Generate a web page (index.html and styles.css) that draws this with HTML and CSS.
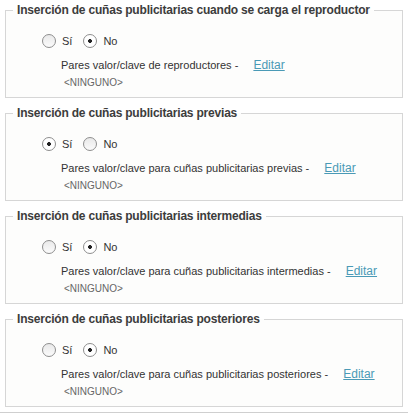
FILE: index.html
```html
<!DOCTYPE html>
<html lang="es">
<head>
    <meta charset="utf-8">
    <link rel="stylesheet" href="styles.css">
</head>
<body>
    <div class="panel">
        <fieldset class="grupo">
            <legend>Inserción de cuñas publicitarias cuando se carga el reproductor</legend>
            <div class="opciones">
                <label><input type="radio" name="carga"> Sí</label>
                <label><input type="radio" name="carga" checked> No</label>
            </div>
            <p class="pares">Pares valor/clave de reproductores - <a href="#">Editar</a></p>
            <p class="ninguno">&lt;NINGUNO&gt;</p>
        </fieldset>
        <fieldset class="grupo">
            <legend>Inserción de cuñas publicitarias previas</legend>
            <div class="opciones">
                <label><input type="radio" name="previas" checked> Sí</label>
                <label><input type="radio" name="previas"> No</label>
            </div>
            <p class="pares">Pares valor/clave para cuñas publicitarias previas - <a href="#">Editar</a></p>
            <p class="ninguno">&lt;NINGUNO&gt;</p>
        </fieldset>
        <fieldset class="grupo">
            <legend>Inserción de cuñas publicitarias intermedias</legend>
            <div class="opciones">
                <label><input type="radio" name="intermedias"> Sí</label>
                <label><input type="radio" name="intermedias" checked> No</label>
            </div>
            <p class="pares">Pares valor/clave para cuñas publicitarias intermedias - <a href="#">Editar</a></p>
            <p class="ninguno">&lt;NINGUNO&gt;</p>
        </fieldset>
        <fieldset class="grupo">
            <legend>Inserción de cuñas publicitarias posteriores</legend>
            <div class="opciones">
                <label><input type="radio" name="posteriores"> Sí</label>
                <label><input type="radio" name="posteriores" checked> No</label>
            </div>
            <p class="pares">Pares valor/clave para cuñas publicitarias posteriores - <a href="#">Editar</a></p>
            <p class="ninguno">&lt;NINGUNO&gt;</p>
        </fieldset>
    </div>
    <div class="pie"></div>
</body>
</html>
```

FILE: styles.css
```css
body {
    margin: 0;
    background-color: #fff;
    font-family: "Liberation Sans", Arial, sans-serif;
    color: #333;
}
.panel {
    padding: 3px 5px 0 5px;
}
.grupo {
    margin: 0 0 8px 0;
    padding: 0 7px 8px 7px;
    border: 1px solid #d6d6d6;
    background-color: #fdfdfc;
}
.grupo:last-child {
    margin-bottom: 5px;
}
.grupo legend {
    padding: 0 4px;
    font-size: 12px;
    line-height: 15px;
    font-weight: bold;
    letter-spacing: -0.2px;
    color: #3c3c3c;
}
.opciones {
    display: flex;
    align-items: center;
    height: 16px;
    margin: 15px 0 0 29px;
    font-size: 11px;
}
.opciones label {
    display: flex;
    align-items: center;
    margin-right: 11px;
}
.opciones input {
    appearance: none;
    -webkit-appearance: none;
    width: 14px;
    height: 14px;
    margin: 0 6px 0 0;
    border: 1px solid #8e8e8e;
    border-radius: 50%;
    background: linear-gradient(#e9e9e9, #fbfbfb);
    box-sizing: border-box;
}
.opciones input:checked {
    background: radial-gradient(circle, #222 0 1.6px, #fff 2.2px);
}
.pares {
    margin: 9px 0 0 48px;
    font-size: 11px;
    line-height: 14px;
}
.pares a {
    margin-left: 12px;
    font-size: 12px;
    color: #4a9ab6;
}
.ninguno {
    margin: 4px 0 0 51px;
    font-size: 10px;
    line-height: 13px;
    color: #666;
}
.pie {
    border-top: 1px solid #cfcfcf;
}
```
